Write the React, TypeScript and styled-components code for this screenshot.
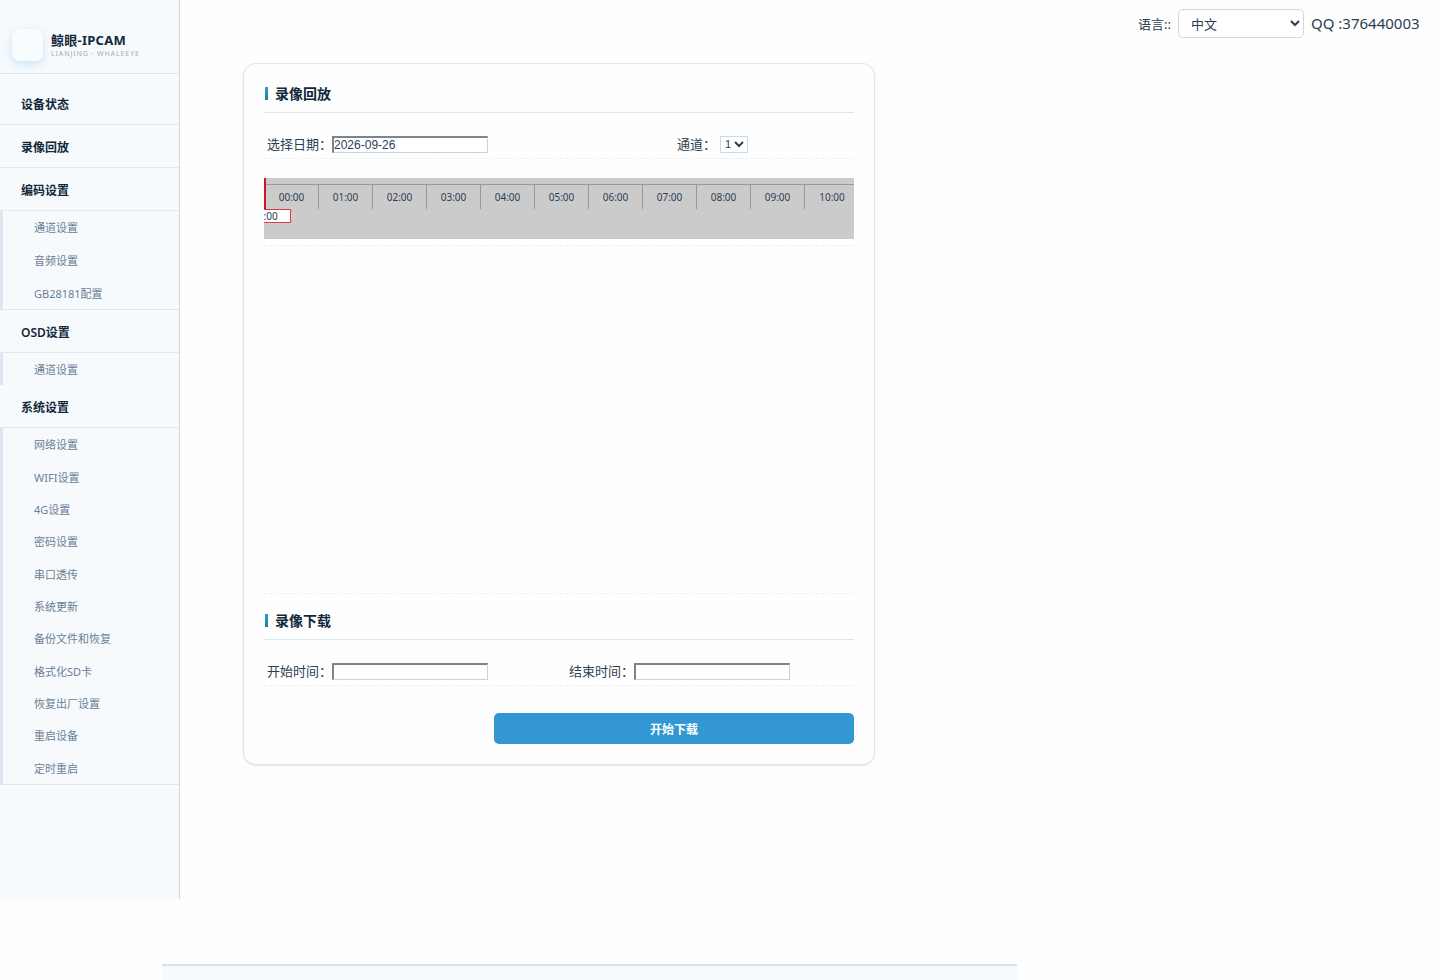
import React from "react";
import styled, { createGlobalStyle, css } from "styled-components";

const GlobalStyle = createGlobalStyle`
  *, *::before, *::after { box-sizing: border-box; }
  body {
    margin: 0;
    background: #fefefe;
    color: #2c4054;
    font-family: "Noto Sans", "Noto Sans CJK SC", sans-serif;
    font-size: 13px;
  }
  button, select { font-family: inherit; }
`;

const Page = styled.div`
  display: flex;
  flex-direction: column;
  min-height: 100vh;
`;

const Body = styled.div`
  display: flex;
  flex: 0 0 auto;
  min-height: 899px;
`;

const Sidebar = styled.aside`
  flex: 0 0 180px;
  background: #f6fafd;
  border-right: 1px solid #c9d8e3;
`;

const Brand = styled.div`
  display: flex;
  align-items: center;
  gap: 8px;
  padding: 29px 12px 12px;
  border-bottom: 1px solid #dbe6ee;
`;

const BrandMark = styled.div`
  width: 31px;
  height: 32px;
  border-radius: 8px;
  background: #f9fcfe;
  box-shadow: 0 3px 9px rgba(52, 152, 219, 0.22);
`;

const BrandName = styled.div`
  padding-top: 2px;
  color: #12283a;
  font-size: 13px;
  font-weight: 700;
  letter-spacing: 0.02em;
  line-height: 16px;
`;

const BrandTag = styled.div`
  color: #9aacba;
  font-size: 7px;
  letter-spacing: 0.13em;
  line-height: 12px;
  white-space: nowrap;
`;

const Nav = styled.nav`
  padding-top: 8px;
`;

const NavItem = styled.a`
  display: block;
  padding: 3px 0 0 21px;
  border-bottom: 1px solid #dfe9f0;
  color: #12283a;
  font-size: 12px;
  font-weight: 600;
  line-height: 39px;
  text-decoration: none;
`;

const SubList = styled.ul<{ $height: number; $closed?: boolean }>`
  display: grid;
  align-items: center;
  min-height: ${(p) => p.$height}px;
  margin: 0;
  padding: 0 0 0 31px;
  list-style: none;
  box-shadow: inset 3px 0 #dce8f1;
  ${(p) =>
    p.$closed &&
    css`
      border-bottom: 1px solid #dbe6ee;
    `}
`;

const SubLink = styled.a`
  display: block;
  padding: 2px 0 0 3px;
  color: #6b8095;
  font-size: 11px;
  line-height: 30px;
  text-decoration: none;
`;

const Main = styled.main`
  flex: 1;
  min-width: 0;
`;

const TopBar = styled.header`
  display: flex;
  align-items: center;
  justify-content: flex-end;
  gap: 7px;
  padding: 9px 18px 0;
`;

const LanguageSelect = styled.select`
  width: 126px;
  height: 29px;
  padding: 0 0 0 8px;
  border: 1px solid #c5dbe6;
  border-radius: 5px;
  background: #fff;
  color: #2c4054;
  font-size: 13px;
`;

const Contact = styled.span`
  min-width: 111px;
  padding-bottom: 2px;
  font-size: 15px;
  line-height: 24px;
`;

const Card = styled.section`
  width: calc(100% - 126px);
  max-width: 632px;
  margin: 25px 63px 0;
  padding: 16px 20px 20px;
  border: 1px solid #d9e7ee;
  border-radius: 13px;
  background: #fefefe;
  box-shadow: 0 1px 2px rgba(60, 110, 140, 0.14);
`;

const SectionTitle = styled.h2`
  display: flex;
  align-items: center;
  gap: 7px;
  margin: 0;
  padding-bottom: 5px;
  border-bottom: 1px solid #dbe7ef;
  color: #12283a;
  font-size: 14px;
  font-weight: 700;
  line-height: 27px;

  &::before {
    content: "";
    width: 3px;
    height: 13px;
    margin-left: 1px;
    background: linear-gradient(#3498db, #1f7f9c);
  }
`;

const FieldRow = styled.div<{ $columns: string }>`
  display: grid;
  grid-template-columns: ${(p) => p.$columns};
  align-items: center;
  height: 29px;
  margin-top: 17px;
  border-bottom: 1px dashed #e8eff4;
`;

const Field = styled.label`
  display: flex;
  align-items: center;
  padding-left: 3px;
  line-height: 18px;
  white-space: nowrap;
`;

const DateInput = styled.input`
  width: 156px;
  height: 17px;
  padding: 0;
  border: 2px solid;
  border-color: #7d858c #c4d3dc #c4d3dc #7d858c;
  border-right-width: 1px;
  border-bottom-width: 1px;
  border-radius: 0;
  background: #fff;
  color: #2c4054;
  font-family: "Liberation Sans", sans-serif;
  font-size: 12px;
`;

const ChannelSelect = styled.select`
  width: 28px;
  height: 17px;
  margin-left: 4px;
  padding: 0;
  border: 1px solid #c5dbe6;
  border-radius: 0;
  background: #fff;
  color: #2c4054;
  font-family: "Liberation Sans", sans-serif;
  font-size: 11px;
`;

const TimelineRow = styled.div`
  padding: 19px 0 6px;
  border-bottom: 1px dashed #e8eff4;
`;

const Timeline = styled.div`
  position: relative;
  height: 61px;
  padding-top: 6px;
  overflow: hidden;
  background: #cbcbcb;
`;

const Hours = styled.div`
  display: flex;
  padding-left: 1px;
  border-top: 1px solid #999;
`;

const Hour = styled.span`
  flex: 0 0 54px;
  height: 24px;
  border-right: 1px solid #999;
  font-size: 10px;
  line-height: 24px;
  text-align: center;

  &:last-child {
    border-right: 0;
  }
`;

const Playhead = styled.div`
  position: absolute;
  top: 0;
  left: 0;
  width: 2px;
  height: 31px;
  background: #d4141c;
`;

const PlayheadTime = styled.div`
  position: absolute;
  top: 31px;
  left: -27px;
  width: 54px;
  height: 14px;
  padding-right: 13px;
  border: 1px solid #dc3a40;
  background: #fff;
  font-size: 10px;
  line-height: 13px;
  text-align: right;
`;

const Player = styled.div`
  height: 348px;
  margin-bottom: 13px;
  border-bottom: 1px dashed #e8eff4;
`;

const Actions = styled.div`
  display: flex;
  justify-content: flex-end;
  margin-top: 27px;
`;

const DownloadButton = styled.button`
  width: 61%;
  height: 31px;
  padding: 0;
  border: 0;
  border-radius: 5px;
  background: #3397d3;
  color: #fff;
  font-size: 12px;
  font-weight: 700;
`;

const Footer = styled.footer`
  flex: 1;
  width: 60%;
  max-width: 855px;
  min-height: 16px;
  margin: 65px 0 0 162px;
  border-top: 2px solid #d5e1e8;
  background: #f6fafd;
`;

type Group = { label: string; items: string[]; height?: number; closed?: boolean };

const groups: Group[] = [
  { label: "设备状态", items: [] },
  { label: "录像回放", items: [] },
  { label: "编码设置", items: ["通道设置", "音频设置", "GB28181配置"], height: 99, closed: true },
  { label: "OSD设置", items: ["通道设置"], height: 32 },
  {
    label: "系统设置",
    items: [
      "网络设置",
      "WIFI设置",
      "4G设置",
      "密码设置",
      "串口透传",
      "系统更新",
      "备份文件和恢复",
      "格式化SD卡",
      "恢复出厂设置",
      "重启设备",
      "定时重启",
    ],
    height: 357,
    closed: true,
  },
];

const hours = Array.from({ length: 11 }, (_, h) => `${String(h).padStart(2, "0")}:00`);

export default function App() {
  return (
    <>
      <GlobalStyle />
      <Page>
        <Body>
          <Sidebar>
            <Brand>
              <BrandMark />
              <div>
                <BrandName>鲸眼-IPCAM</BrandName>
                <BrandTag>LIANJING · WHALEEYE</BrandTag>
              </div>
            </Brand>
            <Nav>
              {groups.map((group) => (
                <React.Fragment key={group.label}>
                  <NavItem href="#">{group.label}</NavItem>
                  {group.items.length > 0 && (
                    <SubList $height={group.height ?? 32} $closed={group.closed}>
                      {group.items.map((item) => (
                        <li key={item}>
                          <SubLink href="#">{item}</SubLink>
                        </li>
                      ))}
                    </SubList>
                  )}
                </React.Fragment>
              ))}
            </Nav>
          </Sidebar>
          <Main>
            <TopBar>
              <label htmlFor="language">语言::</label>
              <LanguageSelect id="language" defaultValue="zh">
                <option value="zh">中文</option>
                <option value="en">English</option>
              </LanguageSelect>
              <Contact>QQ :376440003</Contact>
            </TopBar>
            <Card>
              <SectionTitle>录像回放</SectionTitle>
              <FieldRow $columns="410fr 180fr">
                <Field>
                  选择日期：
                  <DateInput type="text" defaultValue="2026-09-26" />
                </Field>
                <Field>
                  通道：
                  <ChannelSelect defaultValue="1">
                    <option>1</option>
                    <option>2</option>
                  </ChannelSelect>
                </Field>
              </FieldRow>
              <TimelineRow>
                <Timeline>
                  <Hours>
                    {hours.map((hour) => (
                      <Hour key={hour}>{hour}</Hour>
                    ))}
                  </Hours>
                  <Playhead />
                  <PlayheadTime>00:00:00</PlayheadTime>
                </Timeline>
              </TimelineRow>
              <Player />
              <SectionTitle>录像下载</SectionTitle>
              <FieldRow $columns="302fr 288fr">
                <Field>
                  开始时间：
                  <DateInput type="text" />
                </Field>
                <Field>
                  结束时间：
                  <DateInput type="text" />
                </Field>
              </FieldRow>
              <Actions>
                <DownloadButton type="button">开始下载</DownloadButton>
              </Actions>
            </Card>
          </Main>
        </Body>
        <Footer />
      </Page>
    </>
  );
}
